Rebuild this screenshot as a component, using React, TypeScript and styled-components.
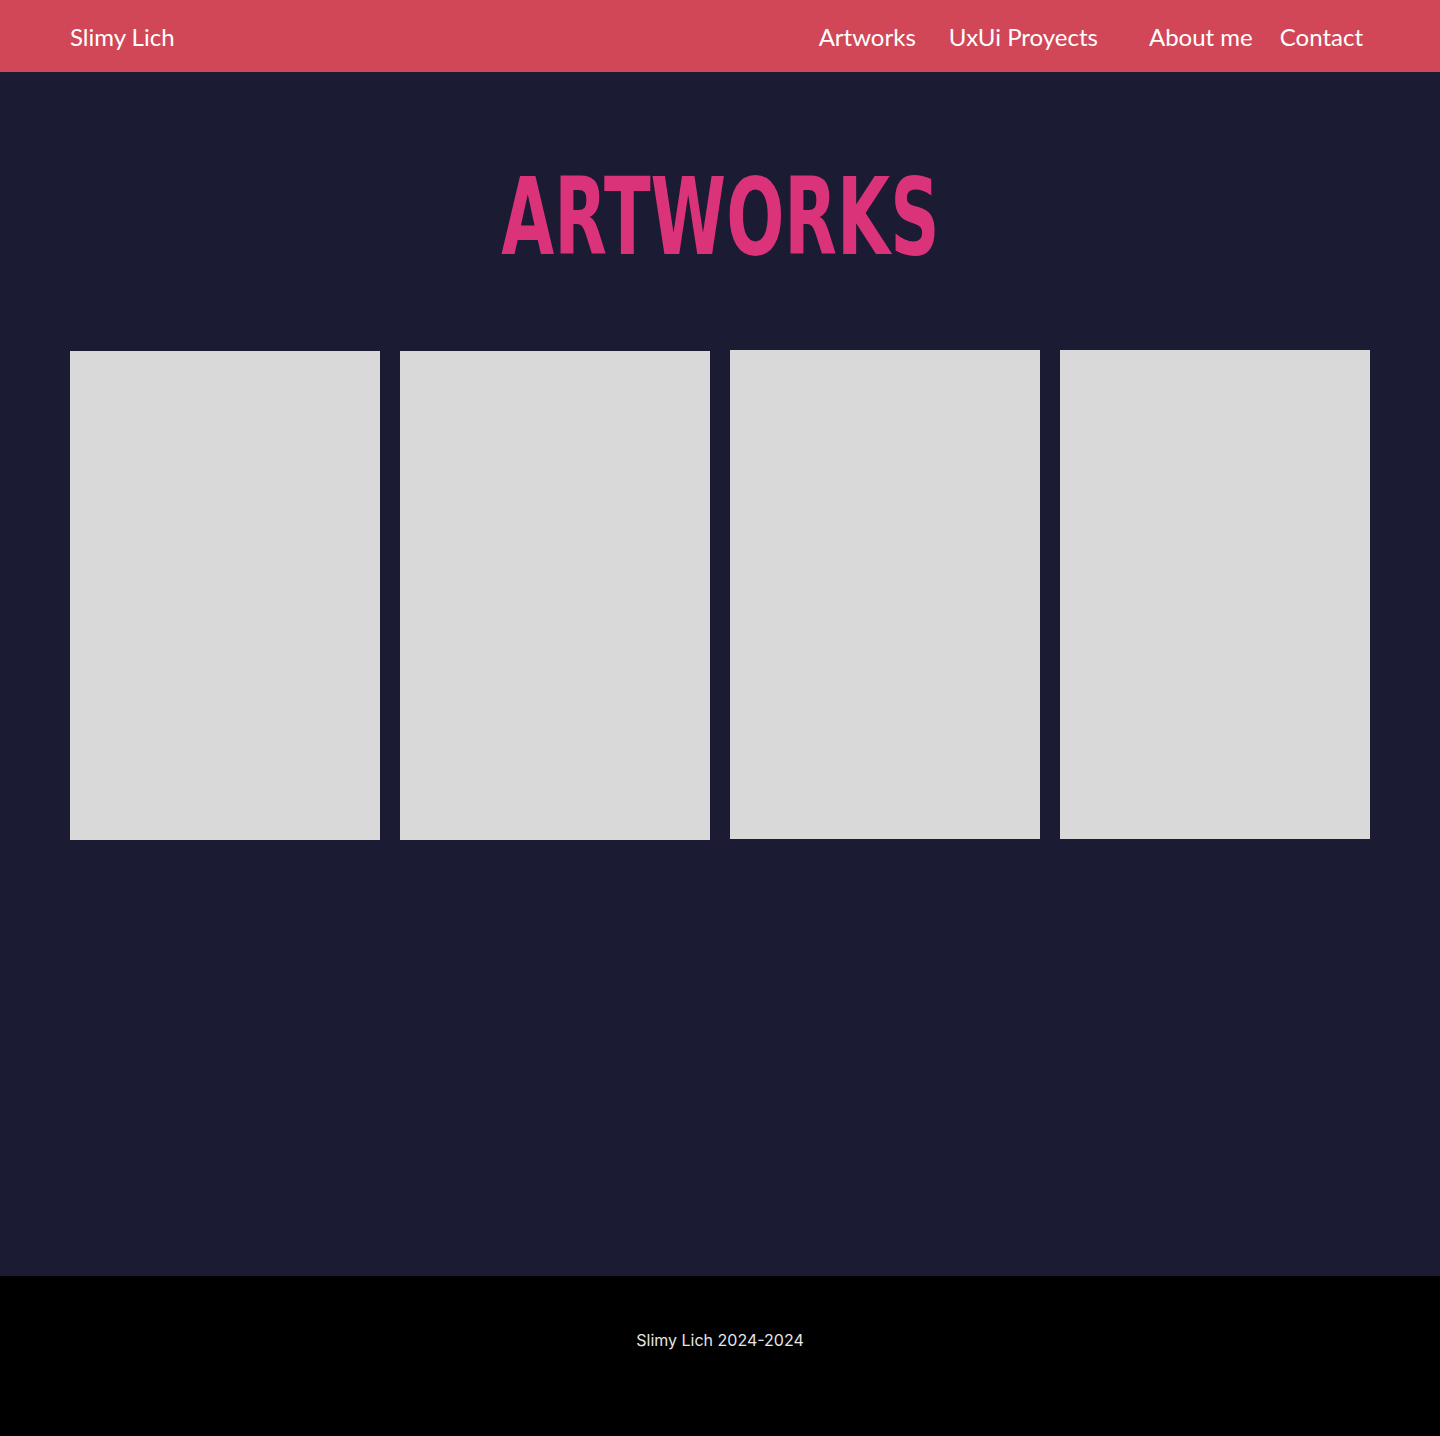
import React from "react";
import styled, { createGlobalStyle } from "styled-components";

const Global = createGlobalStyle`
  html, body { margin: 0; padding: 0; background: #1b1b33; }
  * { box-sizing: border-box; }
`;

const Page = styled.div`
  display: flex;
  flex-direction: column;
  min-height: 1436px;
`;

const Header = styled.header`
  height: 72px;
  background: #d14758;
  display: flex;
  align-items: center;
  justify-content: space-between;
  padding: 0 77px 0 70px;
  font-family: Lato, "Open Sans", sans-serif;
  color: #ffffff;
  font-size: 24px;
`;

const Brand = styled.div`
  font-size: 24px;
`;

const Nav = styled.nav`
  display: flex;
  align-items: center;
`;

const NavLink = styled.a<{ $gap: number }>`
  color: #ffffff;
  text-decoration: none;
  margin-left: ${(p) => p.$gap}px;
`;

const Main = styled.main`
  flex: 1;
  background: #1b1b33;
  display: flex;
  flex-direction: column;
  align-items: center;
  padding: 0 70px;
`;

const Title = styled.h1`
  margin: 92px 0 0;
  font-family: "DejaVu Sans", "Liberation Sans", sans-serif;
  font-weight: 700;
  font-size: 107px;
  line-height: 107px;
  color: #db337a;
  letter-spacing: 0;
  white-space: nowrap;
  transform: scaleX(0.64);
`;

const Grid = styled.div`
  margin-top: 79px;
  width: 100%;
  display: grid;
  grid-template-columns: repeat(4, 310px);
  gap: 20px;
  align-items: start;
`;

const Card = styled.div<{ $shift: number }>`
  height: 489px;
  background: #d9d9d9;
  margin-top: ${(p) => p.$shift}px;
`;

const Footer = styled.footer`
  height: 160px;
  background: #000000;
  display: flex;
  align-items: center;
  justify-content: center;
  padding-bottom: 32px;
  font-family: Inter, "Liberation Sans", sans-serif;
  font-size: 16px;
  color: #e6e6e6;
`;

export default function App() {
  return (
    <Page>
      <Global />
      <Header>
        <Brand>Slimy Lich</Brand>
        <Nav>
          <NavLink $gap={0} href="#">Artworks</NavLink>
          <NavLink $gap={33} href="#">UxUi Proyects</NavLink>
          <NavLink $gap={51} href="#">About me</NavLink>
          <NavLink $gap={27} href="#">Contact</NavLink>
        </Nav>
      </Header>
      <Main>
        <Title>ARTWORKS</Title>
        <Grid>
          <Card $shift={1} />
          <Card $shift={1} />
          <Card $shift={0} />
          <Card $shift={0} />
        </Grid>
      </Main>
      <Footer>Slimy Lich 2024-2024</Footer>
    </Page>
  );
}
